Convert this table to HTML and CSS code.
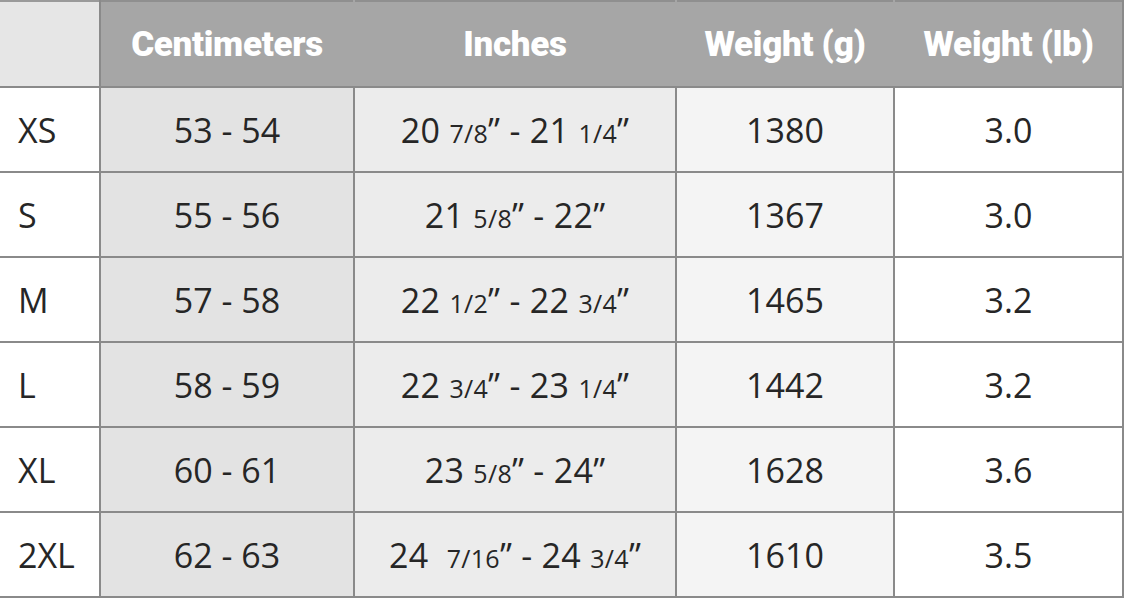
FILE: index.html
```html
<!DOCTYPE html>
<html>
<head>
<meta charset="utf-8">
<link rel="stylesheet" href="styles.css">
</head>
<body>
<table class="chart">
  <colgroup>
    <col class="c-size">
    <col class="c-cm">
    <col class="c-in">
    <col class="c-g">
    <col class="c-lb">
  </colgroup>
  <thead>
    <tr>
      <th class="corner"></th>
      <th>Centimeters</th>
      <th>Inches</th>
      <th>Weight (g)</th>
      <th>Weight (lb)</th>
    </tr>
  </thead>
  <tbody>
    <tr><td class="size">XS</td><td class="cm">53 - 54</td><td class="in">20 <span class="fr">7/8</span>” - 21 <span class="fr">1/4</span>”</td><td class="g">1380</td><td class="lb">3.0</td></tr>
    <tr><td class="size">S</td><td class="cm">55 - 56</td><td class="in">21 <span class="fr">5/8</span>” - 22”</td><td class="g">1367</td><td class="lb">3.0</td></tr>
    <tr><td class="size">M</td><td class="cm">57 - 58</td><td class="in">22 <span class="fr">1/2</span>” - 22 <span class="fr">3/4</span>”</td><td class="g">1465</td><td class="lb">3.2</td></tr>
    <tr><td class="size">L</td><td class="cm">58 - 59</td><td class="in">22 <span class="fr">3/4</span>” - 23 <span class="fr">1/4</span>”</td><td class="g">1442</td><td class="lb">3.2</td></tr>
    <tr><td class="size">XL</td><td class="cm">60 - 61</td><td class="in">23 <span class="fr">5/8</span>” - 24”</td><td class="g">1628</td><td class="lb">3.6</td></tr>
    <tr><td class="size">2XL</td><td class="cm">62 - 63</td><td class="in">24 &nbsp;<span class="fr">7/16</span>” - 24 <span class="fr">3/4</span>”</td><td class="g">1610</td><td class="lb">3.5</td></tr>
  </tbody>
</table>
</body>
</html>
```
FILE: styles.css
```css
html, body {
  margin: 0;
  padding: 0;
  background: #ffffff;
}

.chart {
  border-collapse: collapse;
  table-layout: fixed;
  width: 1123px;
  font-family: "Open Sans", "Noto Sans", sans-serif;
  color: #262626;
}

.c-size { width: 100px; }
.c-cm { width: 254px; }
.c-in { width: 322px; }
.c-g { width: 218px; }
.c-lb { width: 229px; }

.chart th {
  height: 84px;
  padding: 0;
  background: #a6a6a6;
  color: #ffffff;
  font-family: Roboto, "Liberation Sans", sans-serif;
  font-weight: 900;
  font-size: 35px;
  letter-spacing: -0.3px;
  text-align: center;
  border-top: 2px solid #8f8f8f;
  border-bottom: 2px solid #8a8a8a;
  border-right: 2px solid #a6a6a6;
}

.chart th.corner {
  background: #e6e6e6;
  border-right: 2px solid #8a8a8a;
  border-top: 2px solid #9a9a9a;
}

.chart th:last-child {
  border-right: 2px solid #8a8a8a;
}

.chart td {
  height: 83px;
  padding: 0;
  font-size: 34px;
  font-weight: 400;
  text-align: center;
  border: 2px solid #8a8a8a;
  white-space: nowrap;
}

.chart td.size {
  text-align: left;
  padding-left: 18px;
  background: #ffffff;
  border-left: none;
}

.chart td.cm { background: #e3e3e3; }
.chart td.in { background: #ececec; letter-spacing: 0.3px; }
.chart td.g { background: #f4f4f4; }
.chart td.lb { background: #ffffff; }

.fr {
  font-size: 25px;
}
```
